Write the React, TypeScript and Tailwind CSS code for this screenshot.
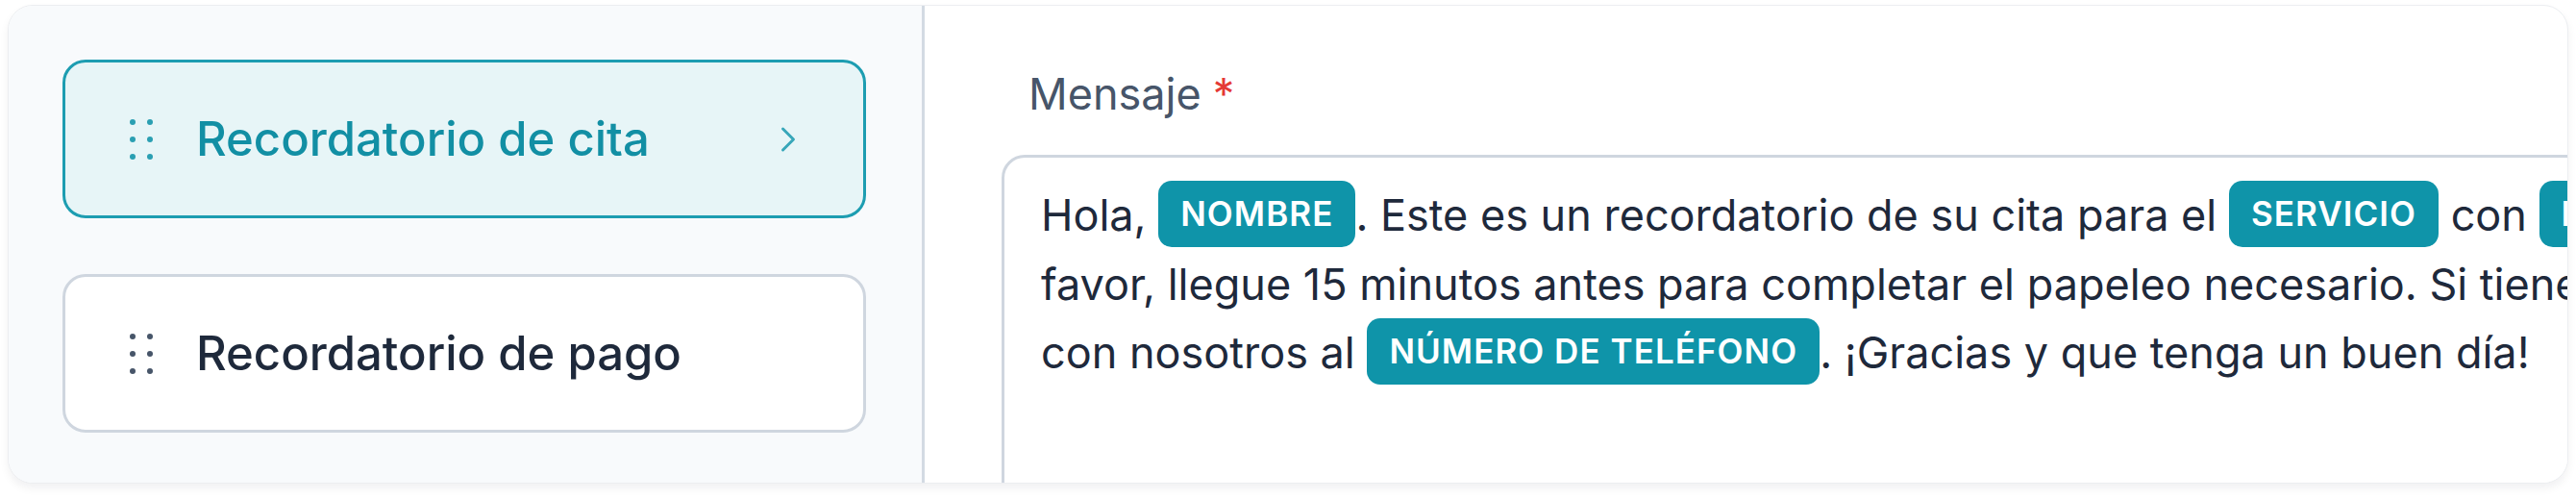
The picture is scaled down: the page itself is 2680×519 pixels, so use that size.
import { ChevronRight } from "lucide-react";

const font = { fontFamily: "Inter, 'Noto Sans', sans-serif" };

function Grip({ className }: { className?: string }) {
  return (
    <svg width="26" height="44" viewBox="0 0 26 44" className={className}>
      {[4, 22, 40].map((y) =>
        [4, 22].map((x) => <circle key={`${x}-${y}`} cx={x} cy={y} r="3" fill="currentColor" />)
      )}
    </svg>
  );
}

function Tag({ children }: { children: React.ReactNode }) {
  return (
    <span className="inline-flex h-[69px] items-center rounded-[14px] bg-[#0f94a9] px-[23px] align-top text-[35px] font-semibold uppercase leading-none tracking-[0.03em] text-white">
      {children}
    </span>
  );
}

interface ReminderCardProps {
  title: string;
  active?: boolean;
}

function ReminderCard({ title, active }: ReminderCardProps) {
  return (
    <div
      className={
        active
          ? "flex h-[165px] items-center rounded-[24px] border-[3px] border-[#1d9db1] bg-[#e7f5f7] pl-[66px] pr-[56px]"
          : "flex h-[165px] items-center rounded-[24px] border-[3px] border-[#cfd6df] bg-white pl-[66px] pr-[56px]"
      }
    >
      <Grip className={active ? "text-[#2a9fb2]" : "text-[#475569]"} />
      <span
        className={
          active
            ? "ml-[44px] text-[49px] font-medium text-[#128fa4]"
            : "ml-[44px] text-[49px] font-medium text-[#1e293b]"
        }
      >
        {title}
      </span>
      {active && <ChevronRight size={44} strokeWidth={1.6} className="ml-auto text-[#38a7b9]" />}
    </div>
  );
}

export default function App() {
  return (
    <div className="h-[519px] w-[2680px] bg-white px-[8px] pt-[5px]" style={font}>
      <div className="flex h-[498px] overflow-hidden rounded-[26px] border border-[#eceef1] bg-white shadow-[0_5px_10px_rgba(15,23,42,0.06)]">
        {/* Left: template list */}
        <div className="flex w-[953px] shrink-0 flex-col gap-[58px] border-r-[3px] border-[#d3dae3] bg-[#f8fafc] pl-[56px] pr-[58px] pt-[56px]">
          <ReminderCard title="Recordatorio de cita" active />
          <ReminderCard title="Recordatorio de pago" />
        </div>

        {/* Right: message editor */}
        <div className="min-w-0 flex-1 overflow-hidden pl-[80px] pt-[59px]">
          <div className="flex items-baseline pl-[28px] text-[45px] leading-[66px] text-[#475569]">
            Mensaje
            <span className="ml-[12px] text-[#e53935]">*</span>
          </div>
          <div className="mt-[30px] h-[420px] w-[1760px] rounded-[24px] border-[3px] border-[#cfd6df] bg-white pl-[38px] pt-[24px] text-[45px] leading-[71.5px] text-[#1e293b]">
            <div className="whitespace-nowrap">
              Hola, <Tag>Nombre</Tag>. Este es un recordatorio de su cita para el <Tag>Servicio</Tag> con{" "}
              <Tag>Profesional</Tag> el <Tag>Fecha</Tag> a las <Tag>Hora</Tag>. Por
            </div>
            <div className="whitespace-nowrap">
              favor, llegue 15 minutos antes para completar el papeleo necesario. Si tiene alguna pregunta, comuníquese
            </div>
            <div className="whitespace-nowrap">
              con nosotros al <Tag>Número de teléfono</Tag>. ¡Gracias y que tenga un buen día!
            </div>
          </div>
        </div>
      </div>
    </div>
  );
}
